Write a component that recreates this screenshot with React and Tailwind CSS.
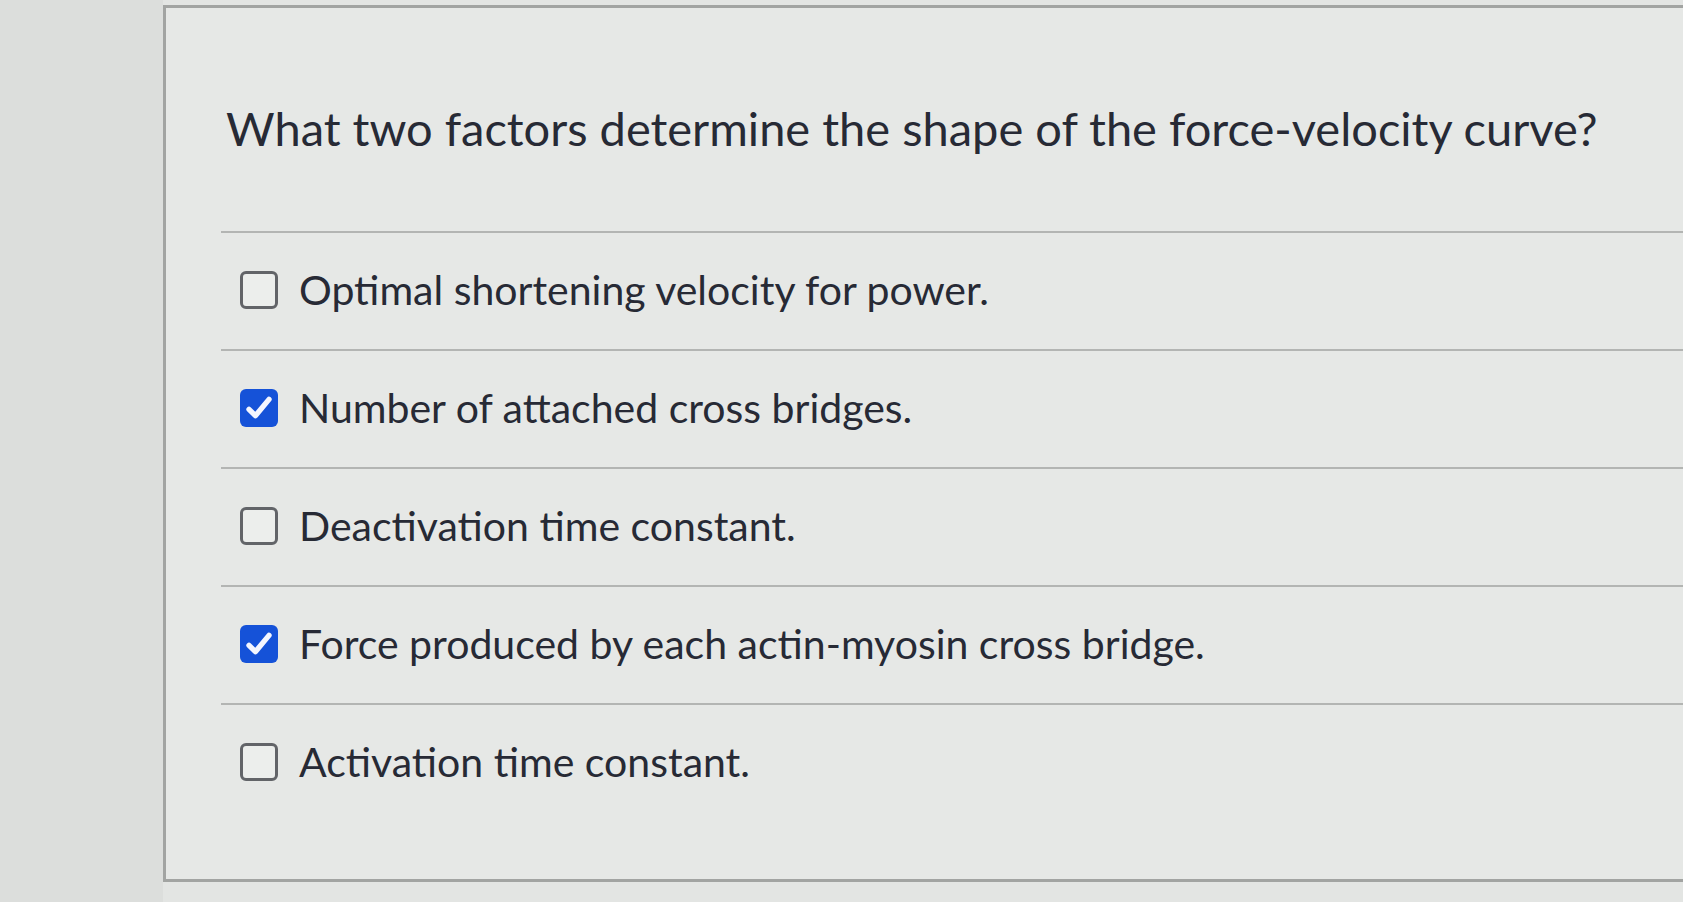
import React from 'react';

const options = [
  { label: 'Optimal shortening velocity for power.', checked: false },
  { label: 'Number of attached cross bridges.', checked: true },
  { label: 'Deactivation time constant.', checked: false },
  { label: 'Force produced by each actin-myosin cross bridge.', checked: true },
  { label: 'Activation time constant.', checked: false },
];

const Checkbox = ({ checked }) =>
  checked ? (
    <span className="flex h-[38px] w-[38px] shrink-0 items-center justify-center rounded-[6px] bg-[#1552d8]">
      <svg viewBox="0 0 24 24" className="h-[32px] w-[32px]" fill="none" stroke="#f4f6ff" strokeWidth="4" strokeLinecap="round" strokeLinejoin="round">
        <path d="M4.5 13l4.8 4.8L19.5 5.5" />
      </svg>
    </span>
  ) : (
    <span className="h-[38px] w-[38px] shrink-0 rounded-[6px] border-[3px] border-[#626468] bg-[#eceeec]" />
  );

export default function App() {
  return (
    <div className="flex h-[902px] w-[1683px] bg-[#e3e5e3] text-[#272a35]" style={{ fontFamily: 'Lato, "Open Sans", sans-serif' }}>
      {/* side panel */}
      <div className="w-[163px] shrink-0 bg-[#dcdedc]" />

      <div className="flex-1 pt-[5px]">
        <div className="h-[877px] border-t-[3px] border-b-[3px] border-l-[3px] border-[#a2a4a2] bg-[#e6e8e6]">
          <div className="flex h-[223px] items-center pl-[60px] pt-[18px]">
            <h1 className="text-[47px] leading-none">
              What two factors determine the shape of the force-velocity curve?
            </h1>
          </div>

          <div className="ml-[55px]">
            {options.map((opt, i) => (
              <div key={i} className="flex h-[118px] items-center gap-[21px] border-t-2 border-[#b3b5b3] pl-[19px] pb-[3px]">
                <Checkbox checked={opt.checked} />
                <span className="text-[41px] leading-none">{opt.label}</span>
              </div>
            ))}
          </div>
        </div>
      </div>
    </div>
  );
}
